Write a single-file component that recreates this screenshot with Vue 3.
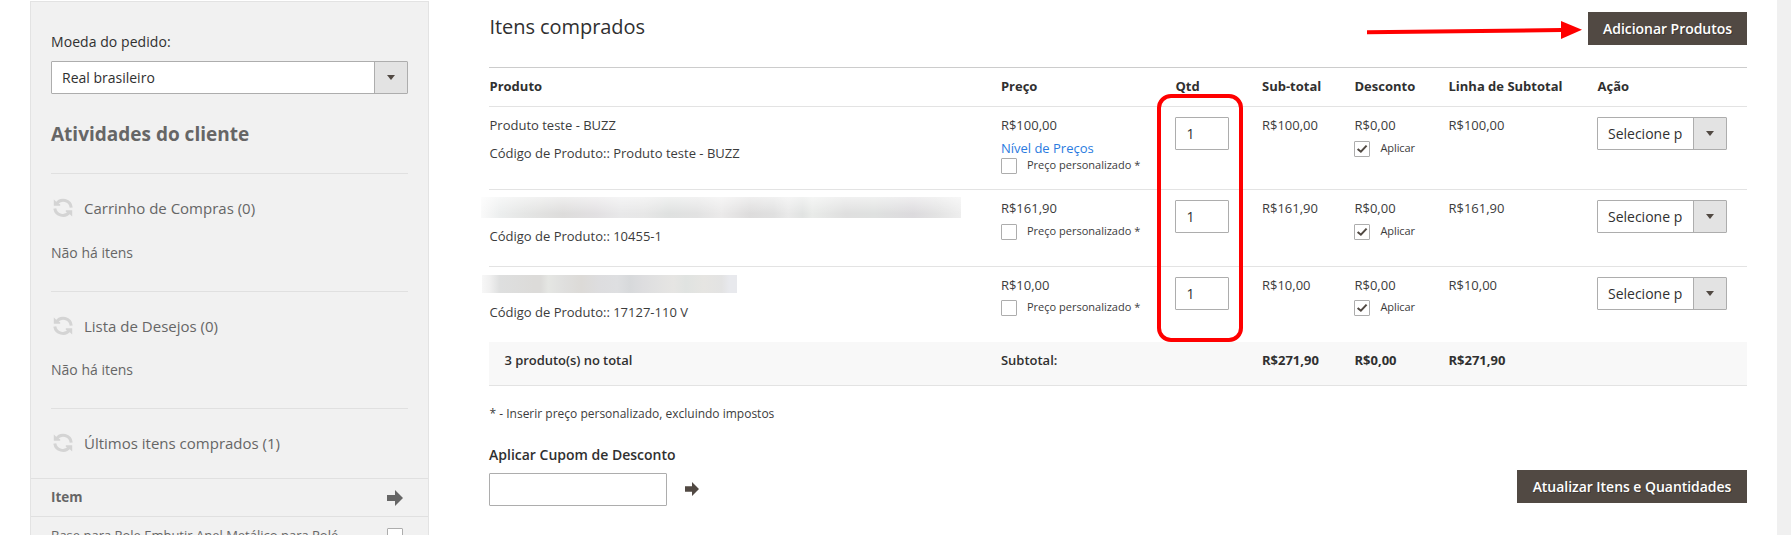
<script setup>
const activities = [
  { title: 'Carrinho de Compras (0)', empty: true },
  { title: 'Lista de Desejos (0)', empty: true },
  { title: 'Últimos itens comprados (1)', empty: false },
]
const columns = ['Produto', 'Preço', 'Qtd', 'Sub-total', 'Desconto', 'Linha de Subtotal', 'Ação']
const items = [
  { id: 'a', name: 'Produto teste - BUZZ', sku: 'Produto teste - BUZZ', price: 'R$100,00', tier: true },
  { id: 'b', name: '', sku: '10455-1', price: 'R$161,90', tier: false },
  { id: 'c', name: '', sku: '17127-110 V', price: 'R$10,00', tier: false },
]
</script>

<template>
  <div class="page">
    <aside class="sidebar">
      <div class="label">Moeda do pedido:</div>
      <div class="select wide">
        <span class="value">Real brasileiro</span>
        <span class="toggle"><i class="caret"></i></span>
      </div>
      <h2 class="side-title">Atividades do cliente</h2>
      <section v-for="a in activities" :key="a.title" class="activity">
        <div class="activity-head">
          <svg class="refresh" viewBox="0 0 20 20" width="20" height="20">
            <path d="M3.5 6A8 8 0 0 1 18.200 9.600" />
            <path d="M1.800 10.400A8.200 8.200 0 0 0 16.500 14" />
            <path class="tip" d="M0.800 1.500V7.700H7.200V6.300L5 5.600 3.300 3.800zM19.200 18.500V12.300H12.800V13.700L15 14.400 16.700 16.200z" />
          </svg>
          <span>{{ a.title }}</span>
        </div>
        <div v-if="a.empty" class="empty">Não há itens</div>
      </section>
      <div class="side-row side-head">
        <span>Item</span>
        <svg class="side-arrow" viewBox="0 0 16 16" width="16" height="16"><path d="M0 5h8V0l8 8-8 8v-5H0z" /></svg>
      </div>
      <div class="side-row side-item">
        <span>Base para Pole Embutir Anel Metálico para Polé</span>
        <i class="check"></i>
      </div>
    </aside>

    <main class="main">
      <header class="head">
        <h1>Itens comprados</h1>
        <button class="btn">Adicionar Produtos</button>
      </header>

      <div class="table">
        <div class="row thead">
          <div v-for="c in columns" :key="c">{{ c }}</div>
        </div>
        <div v-for="it in items" :key="it.id" class="row item" :class="'item-' + it.id">
          <div class="cell">
            <div v-if="it.name" class="line">{{ it.name }}</div>
            <div v-else class="redacted"></div>
            <div class="line sku">Código de Produto:: {{ it.sku }}</div>
          </div>
          <div class="cell">
            <div class="line">{{ it.price }}</div>
            <a v-if="it.tier" class="line tier">Nível de Preços</a>
            <div class="option" :class="{ tight: it.tier }"><i class="check"></i><span>Preço personalizado *</span></div>
          </div>
          <div class="control"><div class="qty">1</div></div>
          <div class="cell"><div class="line">{{ it.price }}</div></div>
          <div class="cell">
            <div class="line">R$0,00</div>
            <div class="option discount">
              <i class="check"><svg viewBox="0 0 14 14" width="14" height="14"><path d="M2.6 6.9L5.9 9.7 11.6 3.6" /></svg></i>
              <span class="apply">Aplicar</span>
            </div>
          </div>
          <div class="cell"><div class="line">{{ it.price }}</div></div>
          <div class="control">
            <div class="select">
              <span class="value">Selecione p</span>
              <span class="toggle"><i class="caret"></i></span>
            </div>
          </div>
        </div>
        <div class="row tfoot">
          <div class="count">3 produto(s) no total</div>
          <div>Subtotal:</div>
          <div></div>
          <div class="sum">R$271,90</div>
          <div class="sum">R$0,00</div>
          <div class="sum">R$271,90</div>
          <div></div>
        </div>
      </div>

      <p class="note">* - Inserir preço personalizado, excluindo impostos</p>

      <div class="bottom">
        <div class="coupon">
          <div class="coupon-label">Aplicar Cupom de Desconto</div>
          <div class="coupon-row">
            <div class="coupon-input"></div>
            <svg viewBox="0 0 14 14" width="14" height="14"><path d="M0 4.3h7V0l7 7-7 7V9.700H0z" /></svg>
          </div>
        </div>
        <button class="btn update">Atualizar Itens e Quantidades</button>
      </div>
    </main>

    <div class="gutter"></div>

    <div class="highlight"></div>
    <svg class="pointer" viewBox="0 0 216 20" width="216" height="20">
      <path class="shaft" d="M0 11.300L195 9" />
      <path d="M194 0L215 8.700 194 18z" />
    </svg>
  </div>
</template>

<style>
body {
  background: #fff;
}
</style>

<style scoped>
.page {
  position: relative;
  display: flex;
  box-sizing: border-box;
  height: 535px;
  overflow: hidden;
  padding-left: 30px;
  font-family: "Open Sans", "Noto Sans", sans-serif;
  font-size: 13px;
  color: #303030;
}
h1, h2, p {
  margin: 0;
}
.sidebar {
  box-sizing: border-box;
  flex: none;
  width: 399px;
  height: 560px;
  margin-top: 1px;
  padding: 30px 20px 0;
  border: 1px solid #e3e3e3;
  background: #f1f1f1;
  color: #666;
}
.label {
  font-size: 14px;
  line-height: 20px;
  color: #303030;
  letter-spacing: 0.06px;
}
.select {
  box-sizing: border-box;
  display: flex;
  width: 130px;
  height: 33px;
  border: 1px solid #adadad;
  border-radius: 1px;
  background: #fff;
  color: #303030;
  font-size: 14px;
  line-height: 31px;
}
.select.wide {
  width: 357px;
  margin-top: 9px;
}
.value {
  flex: 1;
  padding-left: 10px;
  white-space: nowrap;
}
.toggle {
  display: flex;
  align-items: center;
  justify-content: center;
  width: 32px;
  border-left: 1px solid #adadad;
  background: #e3e3e3;
}
.caret {
  border: 4px solid transparent;
  border-top: 5px solid #514943;
  border-bottom: 0;
}
.side-title {
  margin-top: 26px;
  padding-top: 1px;
  font-size: 19px;
  font-weight: 700;
  line-height: 27px;
}
.activity {
  margin-top: 28px;
  border-top: 1px solid #e0e0e0;
  padding-top: 24px;
}
.side-title + .activity {
  margin-top: 25px;
}
.activity-head {
  display: flex;
  align-items: center;
  font-size: 15px;
  line-height: 20px;
}
.refresh {
  margin: 0 11px 0 2px;
  fill: none;
  stroke: #d4d4d4;
  stroke-width: 3;
}
.refresh .tip {
  fill: #d4d4d4;
  stroke: none;
}
.empty {
  margin-top: 24px;
  font-size: 14px;
  line-height: 20px;
}
.side-title + .activity .empty {
  margin-top: 25px;
}
.side-row {
  display: flex;
  justify-content: space-between;
  margin: 0 -20px;
  padding: 0 25px 0 20px;
  border-top: 1px solid #e0e0e0;
}
.side-head {
  height: 37px;
  margin-top: 25px;
  font-size: 13.500px;
  font-weight: 700;
  line-height: 36px;
}
.side-arrow {
  margin-top: 11px;
  fill: #666;
}
.side-item {
  padding-top: 8px;
  line-height: 20px;
}
.side-item .check {
  margin-top: 3px;
}
.main {
  flex: none;
  width: 1258px;
  margin-left: 60px;
}
.head {
  display: flex;
  justify-content: space-between;
  height: 55px;
  padding-top: 12px;
}
h1 {
  padding: 1px 0 0 0.500px;
  font-size: 20px;
  font-weight: 400;
  line-height: 28px;
  letter-spacing: -0.06px;
}
.btn {
  height: 33px;
  padding: 0 15px;
  border: 0;
  background: #514943;
  color: #fff;
  font: 600 14px/33px "Open Sans", sans-serif;
  text-shadow: 1px 1px 0 rgba(0, 0, 0, 0.25);
  letter-spacing: -0.04px;
  width: 159px;
  white-space: nowrap;
}
.row {
  display: grid;
  grid-template-columns: 511.400px 174.600px 86.500px 92.500px 94px 149px 150px;
  box-sizing: border-box;
}
.thead {
  height: 40px;
  border-top: 1px solid #ccc;
  border-bottom: 1px solid #e3e3e3;
  font-weight: 700;
  line-height: 36px;
}
.thead div,
.tfoot div,
.line {
  text-indent: 0.500px;
}
.item {
  height: 77px;
  border-bottom: 1px solid #e3e3e3;
}
.item-a {
  height: 83px;
}
.item-c {
  height: 75px;
  border-bottom: 0;
}
.cell {
  padding-top: 8px;
  color: #3c3c3c;
}
.control {
  padding-top: 10px;
}
.line {
  display: block;
  line-height: 20px;
}
.sku {
  margin-top: 8px;
}
.redacted {
  width: 480px;
  height: 21px;
  margin: -1px 0 0 -8px;
  background:
    linear-gradient(rgba(255, 255, 255, 0.55), rgba(255, 255, 255, 0) 80%),
    linear-gradient(90deg, #fafafa 0, #eceeee 4%, #e5e6e5 9%, #dddcdb 17%, #e2e0e2 24%, #e8e8e9 29%, #e7e7e7 34%, #dfe1e0 39%, #e2e2e2 45%, #ebeaea 50%, #dddcdc 56%, #e0e0e0 61%, #e9e9e9 64%, #e1e3e2 67%, #e9ebe9 69%, #dfdfdf 76%, #dfe1e0 82%, #dcdadd 90%, #e3e3e3 95%, #eeeeee 100%);
}
.item-c .redacted {
  width: 255px;
  height: 18px;
  margin: 0 0 0 -7px;
  background: linear-gradient(90deg, #f7f7f7 0, #f0f0f0 3%, #dedfdf 7%, #dcdbd9 20%, #dcdbd9 23%, #e5e6e3 26%, #dfdfde 32%, #dcdad7 39%, #dddddf 46%, #dedfe1 53%, #d7d9db 58%, #dddddf 63%, #e1e1e1 68%, #e6e5e3 75%, #e0e3e1 80%, #e6e5e2 87%, #e3e3e3 94%, #e8e9ed 97%, #e8e9ed 100%);
}
.item-c .sku {
  margin-top: 9px;
}
.tier {
  margin-top: 3px;
  color: #2a7be0;
}
.option {
  display: flex;
  margin: 6px 0 0 0.600px;
  font-size: 11px;
  line-height: 14px;
}
.option.discount {
  margin-left: 0;
}
.item-c .option {
  margin-top: 5px;
}
.option.tight {
  margin-top: 0;
}
.option span {
  margin-left: 10px;
  white-space: nowrap;
}
.option .apply {
  margin-left: 10.500px;
  letter-spacing: -0.1px;
}
.check {
  box-sizing: border-box;
  flex: none;
  width: 16px;
  height: 16px;
  border: 1px solid #adadad;
  border-radius: 1px;
  background: #fff;
}
.check svg {
  display: block;
  fill: none;
  stroke: #514943;
  stroke-width: 2;
}
.qty {
  box-sizing: border-box;
  width: 54px;
  height: 33px;
  padding-left: 10.500px;
  border: 1px solid #adadad;
  border-radius: 1px;
  font-size: 14px;
  line-height: 31px;
}
.tfoot {
  height: 44px;
  border-bottom: 1px solid #e3e3e3;
  background: #f8f8f8;
  font-weight: 600;
  line-height: 36px;
}
.count {
  padding-left: 15px;
  letter-spacing: -0.05px;
}
.row .sum {
  font-weight: 700;
}
.note {
  margin-top: 18px;
  font-size: 12px;
  line-height: 20px;
  text-indent: 0.500px;
  color: #3c3c3c;
}
.bottom {
  display: flex;
  justify-content: space-between;
}
.coupon-label {
  margin-top: 21px;
  font-size: 14px;
  font-weight: 600;
  line-height: 20px;
}
.coupon-row {
  display: flex;
  align-items: center;
  margin-top: 8px;
}
.coupon-row svg {
  margin: 0 0 2px 18px;
  fill: #514943;
}
.coupon-input {
  box-sizing: border-box;
  width: 178px;
  height: 33px;
  border: 1px solid #adadad;
  border-radius: 1px;
}
.btn.update {
  width: 230px;
  margin-top: 46px;
}
.gutter {
  flex: none;
  width: 14px;
  margin-left: 30px;
  background: #f0f0f0;
}
.highlight {
  position: absolute;
  left: 1157px;
  top: 94px;
  box-sizing: border-box;
  width: 86px;
  height: 248px;
  border: 4px solid #f00;
  border-radius: 14px;
}
.pointer {
  position: absolute;
  left: 1367px;
  top: 21px;
  fill: #f00;
}
.pointer .shaft {
  stroke: #f00;
  stroke-width: 4;
}
</style>
